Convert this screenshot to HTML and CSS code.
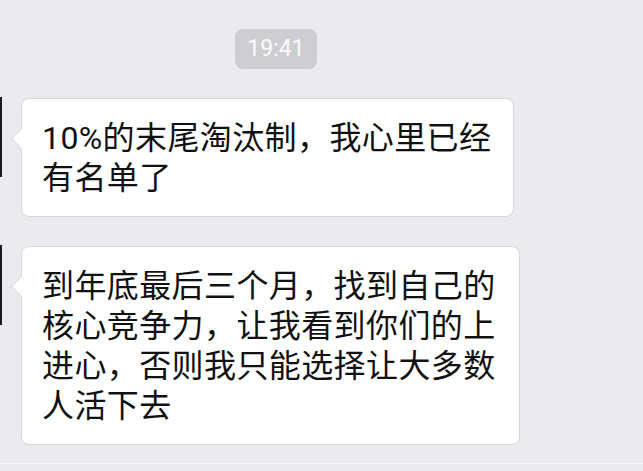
FILE: index.html
```html
<!DOCTYPE html>
<html lang="zh-CN">
<head>
    <meta charset="UTF-8">
    <meta name="viewport" content="width=device-width, initial-scale=1.0">
    <title>聊天记录</title>
    <link rel="stylesheet" href="styles.css">
</head>
<body>
    <div class="chat">
        <div class="time"><span>19:41</span></div>

        <div class="msg">
            <div class="avatar"></div>
            <div class="bubble bubble-short">10%的末尾淘汰制，我心里已经有名单了</div>
        </div>

        <div class="msg">
            <div class="avatar"></div>
            <div class="bubble">到年底最后三个月，找到自己的核心竞争力，让我看到你们的上进心，否则我只能选择让大多数人活下去</div>
        </div>

        <div class="bottom-line"></div>
    </div>
</body>
</html>
```

FILE: styles.css
```css
/* Base */
body {
    margin: 0;
    background-color: #ebeaee;
    font-family: "Noto Sans CJK SC", "Noto Sans", sans-serif;
    color: #111;
}

.chat {
    padding-top: 29px;
}

/* Time stamp */
.time {
    padding-left: 235px;
}

.time span {
    display: inline-block;
    width: 82px;
    height: 40px;
    line-height: 40px;
    text-align: center;
    background-color: #cecdd1;
    color: #fbfbfb;
    border-radius: 8px;
    font-family: Roboto, sans-serif;
    font-size: 23px;
}

/* Messages */
.msg {
    display: flex;
    align-items: flex-start;
    margin-top: 29px;
}

.avatar {
    width: 2px;
    height: 80px;
    margin-top: -1px;
    background-color: #1c1c1c;
}

.bubble {
    position: relative;
    margin-left: 19px;
    max-width: 456px;
    padding: 19px 21px 18px 20px;
    background-color: #fff;
    border: 1px solid #d7d6da;
    border-radius: 8px;
    font-family: Roboto, "Noto Sans CJK SC", sans-serif;
    font-size: 32px;
    line-height: 40px;
    letter-spacing: 0.4px;
}

.bubble-short {
    max-width: 450px;
}

/* bubble tail */
.bubble::before {
    content: "";
    position: absolute;
    left: -8px;
    top: 32px;
    width: 14px;
    height: 14px;
    background-color: #fff;
    border-left: 1px solid #d7d6da;
    border-bottom: 1px solid #d7d6da;
    transform: rotate(45deg);
}

.bottom-line {
    height: 1px;
    margin-top: 18px;
    background-color: #f6f6f8;
}
```
